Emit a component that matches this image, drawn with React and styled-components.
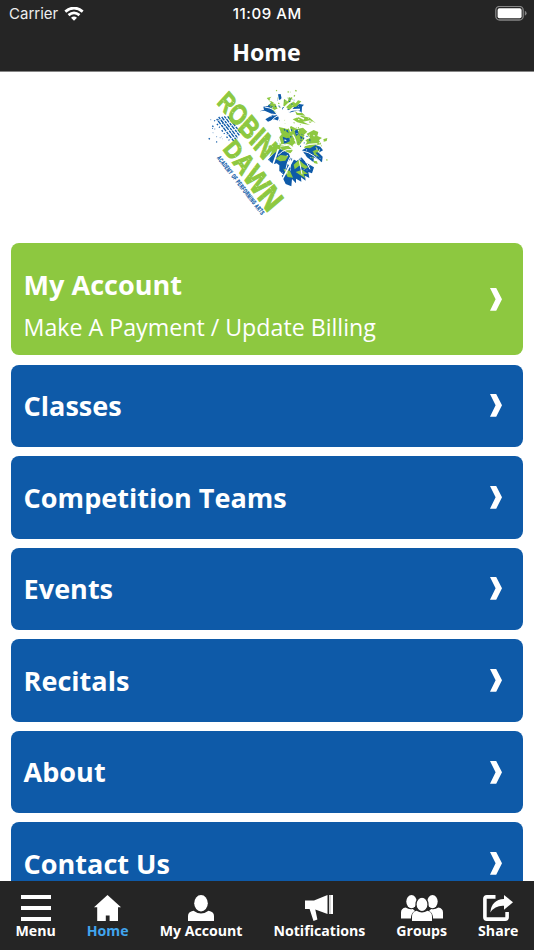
import React from 'react';
import styled, { createGlobalStyle } from 'styled-components';

const GREEN = '#8dc840';
const BLUE = '#0e5aa8';
const DARK = '#252525';

const GlobalStyle = createGlobalStyle`
  * {
    box-sizing: border-box;
  }

  body {
    margin: 0;
    background: #fff;
    font-family: 'Open Sans', sans-serif;
  }
`;

const Screen = styled.div`
  width: 534px;
  height: 950px;
  display: flex;
  flex-direction: column;
  overflow: hidden;
  background: #fff;
`;

const Header = styled.header`
  flex: none;
  height: 72px;
  background: ${DARK};
  border-bottom: 1px solid #858585;
  color: #fff;
`;

const StatusBar = styled.div`
  height: 28px;
  padding: 0 7px 0 9px;
  display: grid;
  grid-template-columns: 1fr auto 1fr;
  align-items: center;
  font-family: Inter, sans-serif;
  font-size: 15px;
  line-height: 28px;

  .carrier {
    display: flex;
    align-items: center;
    gap: 5.5px;
    color: #eee;
  }

  .time {
    font-weight: 500;
    letter-spacing: 0.55px;
    padding-right: 1.5px;
  }

  .battery {
    display: flex;
    justify-content: flex-end;
  }

  svg {
    display: block;
  }
`;

const Title = styled.h1`
  margin: 0;
  font-size: 23.2px;
  line-height: 32px;
  padding-top: 8px;
  padding-right: 1px;
  text-align: center;
  font-weight: 700;
`;

const Content = styled.main`
  flex: 1;
  min-height: 0;
  overflow: hidden;
  padding: 8px 11px 0;
`;

const LogoWrap = styled.div`
  height: 163.4px;
  padding-left: 6px;
  display: flex;
  justify-content: center;

  svg {
    display: block;
    flex: none;
    overflow: visible;
  }
`;

const CardList = styled.div`
  display: flex;
  flex-direction: column;
  gap: 9.2px;
`;

const Card = styled.div`
  flex: none;
  height: ${props => (props.$tall ? '112px' : '82.4px')};
  padding: 0 21px 0 12.6px;
  border-radius: 8px;
  background: ${props => (props.$tall ? GREEN : BLUE)};
  color: #fff;
  display: flex;
  align-items: center;
  justify-content: space-between;
`;

const CardText = styled.div`
  padding-top: ${props => (props.$tall ? '10px' : '0.6px')};
`;

const CardTitle = styled.div`
  font-size: 27.05px;
  line-height: 40px;
  font-weight: 700;
`;

const CardSubtitle = styled.div`
  font-size: 23.2px;
  line-height: 34px;
  padding-top: 5px;
`;

const TabBar = styled.nav`
  flex: none;
  height: 69px;
  padding: 14px 15.5px 0;
  background: ${DARK};
  display: flex;
  justify-content: space-between;
  align-items: flex-start;
`;

const Tab = styled.div`
  display: flex;
  flex-direction: column;
  align-items: center;
  color: ${props => (props.$active ? '#41a5ee' : '#fff')};
  font-size: 14.15px;
  line-height: 20px;
  font-weight: 700;

  svg {
    display: block;
    color: #fff;
  }
`;

const Wifi = () => (
  <svg width="20" height="15" viewBox="0 0 20 15" fill="none" stroke="#fff" strokeWidth="2.7">
    <path d="M1.3 4.6 Q10 -2.6 18.7 4.6" />
    <path d="M4.5 8.1 Q10 3.5 15.5 8.1" />
    <path d="M10 13.8 L7 10.8 Q10 8.4 13 10.8 Z" fill="#fff" stroke="none" />
  </svg>
);

const Battery = () => (
  <svg width="32" height="16" viewBox="0 0 32 16">
    <rect x="0.8" y="0.4" width="27.4" height="13.6" rx="3.8" fill="none" stroke="#858585" strokeWidth="1.3" />
    <rect x="2.6" y="2.2" width="24" height="10" rx="1.8" fill="#fff" />
    <path d="M29.8 4.7 Q31.6 5.5 31.6 7.2 Q31.6 8.9 29.8 9.7 Z" fill="#858585" />
  </svg>
);

const Chevron = () => (
  <svg width="12" height="23" viewBox="0 0 12 23">
    <path d="M0 0 H6.2 L12 11.3 L6.2 22.7 H0 L5.6 11.3 Z" fill="#fff" />
  </svg>
);

const icons = {
  menu: (
    <svg width="30" height="26" viewBox="0 0 30 26" fill="currentColor">
      <path d="M0 0h30v4H0zM0 11h30v4H0zM0 22h30v4H0z" />
    </svg>
  ),
  home: (
    <svg width="27" height="26" viewBox="0 0 27 26" fill="currentColor">
      <path d="M13.5 0 L27 12.3 H24 V26 H15.6 V20.5 H11.8 V26 H3.2 V12.3 H0 Z" />
    </svg>
  ),
  account: (
    <svg width="26" height="26" viewBox="0 0 26 26" fill="currentColor">
      <ellipse cx="13" cy="8.2" rx="6.8" ry="8.2" />
      <path d="M0 26 V21 Q0 16.5 5.5 15.7 Q9 18.4 13 18.4 Q17 18.4 20.5 15.7 Q26 16.5 26 21 V26 Z" />
    </svg>
  ),
  notifications: (
    <svg width="28" height="26" viewBox="0 0 28 26" fill="currentColor">
      <path d="M0 5.4 H9 L22.5 0 V19 L10.3 14.6 L12.4 24.6 L8.5 26 L4.6 14 H0 Z" />
      <path d="M24 0h4v19h-4z" />
      <path d="M25 0v19" stroke="#858585" strokeWidth="0.7" />
    </svg>
  ),
  groups: (
    <svg width="42" height="26" viewBox="0 0 42 26" fill="currentColor">
      <ellipse cx="10.5" cy="6.6" rx="5.2" ry="6.6" />
      <ellipse cx="31.5" cy="6.6" rx="5.2" ry="6.6" />
      <path d="M0 23.5 V17.5 Q0 13.4 4.7 12.6 Q8 14.8 11.8 14 L14 16 Q10.2 17.4 9.9 23.5 Z" />
      <path d="M42 23.5 V17.5 Q42 13.4 37.3 12.6 Q34 14.8 30.2 14 L28 16 Q31.8 17.4 32.1 23.5 Z" />
      <ellipse cx="21" cy="9.4" rx="6" ry="7.2" stroke={DARK} strokeWidth="1.2" />
      <path d="M11 26 V21.5 Q11 16.8 15.5 15.8 Q21 19 26.5 15.8 Q31 16.8 31 21.5 V26 Z" />
    </svg>
  ),
  share: (
    <svg width="30" height="26" viewBox="0 0 30 26" fill="currentColor">
      <path
        d="M12.5 1.9 H3.8 Q1.9 1.9 1.9 3.8 V22.2 Q1.9 24.1 3.8 24.1 H22.2 Q24.1 24.1 24.1 22.2 V17"
        fill="none"
        stroke="currentColor"
        strokeWidth="3.6"
      />
      <path d="M21 0 L30 7.3 L21 14.8 V10.8 Q12.2 10.2 7.3 17.5 Q8.5 4.6 21 4 Z" />
    </svg>
  ),
};

// Small ragged specks [x, y, size] that roughen up the artwork.
const specks = (count, x, y, w, h, seed) => {
  let s = seed;
  const next = () => {
    s = (s * 16807) % 2147483647;
    return s / 2147483647;
  };
  return Array.from({ length: count }, () => [x + next() * w, y + next() * h, 1 + next() * 2.6]);
};

const Specks = ({ items, fill }) => (
  <g fill={fill}>
    {items.map(([x, y, r], i) => (
      <path key={i} d={`M${x} ${y - r} l${r} ${r * 0.7} l${-r * 0.4} ${r} l${-r * 1.2} ${-r * 0.5} Z`} />
    ))}
  </g>
);

const Palms = () => (
  <g>
    <g fill={BLUE}>
      <path d="M178 94 L192 90 L190 80 L202 78 L214 68 L222 78 L214 84 L222 94 L236 112 L224 106 L208 98 L194 92 Z" />
      <path d="M268 98 L282 82 L298 72 L312 74 L306 80 L305 98 L294 91 Z" />
      <path d="M196 118 L216 106 L234 108 L240 124 L222 118 L204 125 Z" />
      <path d="M234 43 l8 -1 l3 14 l-8 4 Z M265 60 l16 18 l-16 8 Z M241 80 l8 3 l-2 11 Z" />
      <path d="M204 239 L236 205 L252 212 L267 221 L272 237 L260 250 L270 258 L274 282 L259 276 L252 285 L238 273 L238 256 L230 250 L220 253 Z" />
      <path d="M274 235 L290 243 L304 232 L321 250 L342 262 L336 280 L325 276 L328 294 L315 287 L317 302 L303 292 L304 305 L288 296 L288 310 L276 297 L274 319 L257 312 L245 287 L258 279 L270 290 Z" />
      <path d="M306 211 L323 201 L344 194 L361 200 L369 211 L356 218 L368 230 L366 247 L351 237 L341 232 L341 247 L321 232 Z" />
    </g>
    <g fill={GREEN}>
      <path d="M200 54 L214 50 L209 61 L228 72 L236 86 L226 88 L229 98 L216 89 L218 79 L205 75 L214 70 Z" />
      <path d="M267 51 L276 55 L272 63 L287 70 L294 61 L304 64 L289 80 L277 82 L266 94 L259 78 Z" />
      <path d="M252 57 l13 8 l-5 18 l-10 -6 Z M285 93 l8 6 l14 0 l9 8 l-26 -2 Z" />
      <path d="M236 141 L264 147 L273 138 L291 147 L309 143 L322 155 L312 164 L311 179 L299 198 L284 190 L276 198 L258 194 L240 198 L234 176 L245 163 Z" />
      <path d="M278 118 l27 -11 l24 6 l18 16 l-17 -8 l-21 4 l21 10 l-18 -3 l-20 -5 Z" />
      <path d="M320 161 L341 150 L355 156 L352 168 L365 173 L357 181 L364 193 L346 196 L330 205 L312 203 L321 186 L315 179 L329 175 Z" />
      <path d="M240 200 l25 -3 l14 14 l-8 9 l-24 -9 Z M226 236 l16 -11 l23 3 l-9 14 l-15 2 Z" />
      <path d="M281 254 l16 -15 l14 13 l14 9 l-9 6 l-18 -10 l-14 11 Z M287 276 l20 -7 l17 13 l-13 0 l5 13 l-19 -12 Z M250 266 l20 7 l9 20 l-16 -2 Z" />
      <path d="M206 197 l15 -4 l20 3 l1 12 l-17 10 l-17 13 l8 -17 l-12 2 Z" />
      <path d="M339 213 l13 -5 l9 7 l-15 3 l12 13 l-16 -7 Z M371 177 l11 -3 l-2 9 l-9 2 Z M341 242 l10 2 l2 8 l-11 -3 Z" />
    </g>
    <path
      fill={BLUE}
      d="M248 170 l12 5 l11 -4 l-2 13 l-16 8 Z M257 152 l6 -3 l3 11 Z M284 152 l8 -4 l4 14 l-8 6 Z M262 87 l8 2 l-4 8 Z M300 168 l8 3 l-5 8 Z"
    />
    <Specks fill={GREEN} items={specks(20, 212, 28, 84, 55, 91)} />
    <Specks fill={GREEN} items={specks(26, 245, 120, 92, 84, 29)} />
    <Specks fill={GREEN} items={specks(12, 335, 175, 53, 70, 53)} />
    <Specks fill={BLUE} items={specks(26, 242, 149, 89, 59, 77)} />
    <Specks fill={BLUE} items={specks(12, 226, 45, 66, 41, 14)} />
    <g fill="none" stroke="#fff" strokeWidth="3">
      <path d="M242 106 Q222 84 194 81 M242 106 Q218 98 191 108 M242 106 Q218 108 207 137" />
      <path d="M242 106 Q253 75 278 64 M242 106 Q263 87 300 89 M242 106 Q270 94 312 117" strokeWidth="5" />
      <path d="M242 106 Q231 70 219 53 M242 106 Q245 76 247 54 M242 106 Q223 144 241 191" strokeWidth="5" />
      <path d="M242 106 Q262 117 272 155" strokeWidth="4" />
      <path d="M290 214 Q269 185 242 195 M290 214 Q259 198 234 226 M290 214 Q266 223 258 266" />
      <path d="M290 214 Q291 180 278 164 M290 214 Q303 183 329 171 M290 214 Q310 190 352 192" strokeWidth="4" />
      <path d="M290 214 Q325 207 360 244 M290 214 Q312 229 330 268 M290 214 Q299 243 306 283" />
      <path d="M288 222 L246 299 M235 207 L214 268" strokeWidth="5" />
    </g>
    <circle cx="290" cy="213" r="11" fill="#fff" />
    <Specks fill="#fff" items={specks(110, 190, 45, 170, 235, 17)} />
  </g>
);

const Logo = () => (
  <svg width="140" height="145" viewBox="0 0 420 435" role="img" aria-label="Robin Dawn">
    <Palms />
    <g fill={BLUE}>
      <g fill="none" stroke={BLUE} strokeWidth="4" strokeDasharray="8 2 13 3">
        <path d="M50 117 L101 183" strokeDashoffset="3" />
        <path d="M56 111 L109 180" />
        <path d="M64 109 L113 174" strokeDashoffset="8" />
        <path d="M73 109 L118 166" />
        <path d="M83 109 L122 159" strokeDashoffset="12" />
        <path d="M43 121 L88 181" strokeDasharray="3 10 5 6" />
      </g>
      <Specks fill={BLUE} items={specks(20, 27, 108, 55, 79, 37)} />
    </g>
    <g fontFamily="'Liberation Sans', sans-serif" fontWeight="700" fill={GREEN}>
      {/* the letters of both words grow towards the tip of the heart */}
      <g stroke={GREEN} strokeWidth="3">
        <text transform="translate(49 69) rotate(50.5) skewX(8)" textLength="226" lengthAdjust="spacingAndGlyphs">
          <tspan fontSize="76">R</tspan>
          <tspan fontSize="82">O</tspan>
          <tspan fontSize="86">B</tspan>
          <tspan fontSize="90">I</tspan>
          <tspan fontSize="92">N</tspan>
        </text>
        <text transform="translate(67 207) rotate(54.5) skewX(5)" textLength="238" lengthAdjust="spacingAndGlyphs">
          <tspan fontSize="74">D</tspan>
          <tspan fontSize="82">A</tspan>
          <tspan fontSize="89">W</tspan>
          <tspan fontSize="94">N</tspan>
        </text>
      </g>
      <text
        transform="translate(50 234) rotate(52)"
        textLength="219"
        lengthAdjust="spacingAndGlyphs"
        fontSize="19"
        letterSpacing="2"
        fill={BLUE}
        stroke={BLUE}
        strokeWidth="0.8"
      >
        ACADEMY OF PERFORMING ARTS
      </text>
    </g>
    <g fill="none" stroke="#fff" strokeWidth="1.6" strokeDasharray="5 6 2 9">
      <path d="M69 61 L201 225 M98 65 L221 203 M92 208 L204 370 M118 200 L235 358" />
    </g>
  </svg>
);

const cards = [
  { title: 'My Account', subtitle: 'Make A Payment / Update Billing' },
  { title: 'Classes' },
  { title: 'Competition Teams' },
  { title: 'Events' },
  { title: 'Recitals' },
  { title: 'About' },
  { title: 'Contact Us' },
];

const tabs = [
  { label: 'Menu', icon: 'menu' },
  { label: 'Home', icon: 'home', active: true },
  { label: 'My Account', icon: 'account' },
  { label: 'Notifications', icon: 'notifications' },
  { label: 'Groups', icon: 'groups' },
  { label: 'Share', icon: 'share' },
];

const App = () => (
  <Screen>
    <GlobalStyle />
    <Header>
      <StatusBar>
        <div className="carrier">
          Carrier
          <Wifi />
        </div>
        <div className="time">11:09 AM</div>
        <div className="battery">
          <Battery />
        </div>
      </StatusBar>
      <Title>Home</Title>
    </Header>
    <Content>
      <LogoWrap>
        <Logo />
      </LogoWrap>
      <CardList>
        {cards.map(card => (
          <Card key={card.title} $tall={!!card.subtitle}>
            <CardText $tall={!!card.subtitle}>
              <CardTitle>{card.title}</CardTitle>
              {card.subtitle && <CardSubtitle>{card.subtitle}</CardSubtitle>}
            </CardText>
            <Chevron />
          </Card>
        ))}
      </CardList>
    </Content>
    <TabBar>
      {tabs.map(tab => (
        <Tab key={tab.label} $active={tab.active}>
          {icons[tab.icon]}
          {tab.label}
        </Tab>
      ))}
    </TabBar>
  </Screen>
);

export default App;
